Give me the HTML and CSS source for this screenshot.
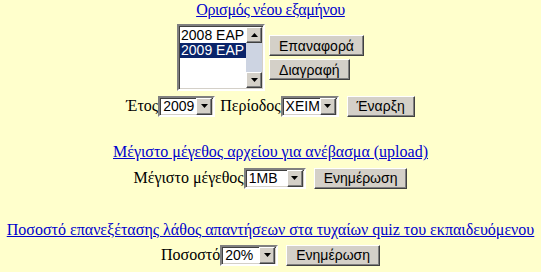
FILE: index.html
```html
<!DOCTYPE html>
<html lang="el">
<head>
<meta charset="utf-8">
<title>Ρυθμίσεις</title>
<link rel="stylesheet" href="styles.css">
</head>
<body>
<div class="page">
  <section class="block first">
    <a class="title" href="#">Ορισμός νέου εξαμήνου</a>
    <div class="semester">
      <div class="listbox">
        <div class="items">
          <div class="item">2008 ΕΑΡ</div>
          <div class="item sel">2009 ΕΑΡ</div>
        </div>
        <div class="vscroll">
          <span class="sbtn"><svg width="7" height="4" viewBox="0 0 7 4"><path d="M3.5 0 L7 4 L0 4 Z" fill="#000"/></svg></span>
          <span class="track"></span>
          <span class="sbtn"><svg width="7" height="4" viewBox="0 0 7 4"><path d="M0 0 L7 0 L3.5 4 Z" fill="#000"/></svg></span>
        </div>
      </div>
      <div class="actions">
        <button class="btn">Επαναφορά</button>
        <button class="btn">Διαγραφή</button>
      </div>
    </div>
    <div class="row r2">
      <span class="lbl">Έτος</span>
      <div class="select w-year"><span class="val">2009</span><span class="arrow"><svg width="7" height="4" viewBox="0 0 7 4"><path d="M0 0 L7 0 L3.5 4 Z" fill="#000"/></svg></span></div>
      <span class="lbl sp">Περίοδος</span>
      <div class="select w-period"><span class="val">ΧΕΙΜ</span><span class="arrow"><svg width="7" height="4" viewBox="0 0 7 4"><path d="M0 0 L7 0 L3.5 4 Z" fill="#000"/></svg></span></div>
      <button class="btn gap">Έναρξη</button>
    </div>
  </section>

  <section class="block second">
    <a class="title" href="#">Μέγιστο μέγεθος αρχείου για ανέβασμα (upload)</a>
    <div class="row r3">
      <span class="lbl">Μέγιστο μέγεθος</span>
      <div class="select w-size"><span class="val">1MB</span><span class="arrow"><svg width="7" height="4" viewBox="0 0 7 4"><path d="M0 0 L7 0 L3.5 4 Z" fill="#000"/></svg></span></div>
      <button class="btn gap">Ενημέρωση</button>
    </div>
  </section>

  <section class="block third">
    <a class="title" href="#">Ποσοστό επανεξέτασης λάθος απαντήσεων στα τυχαίων quiz του εκπαιδευόμενου</a>
    <div class="row r4">
      <span class="lbl">Ποσοστό</span>
      <div class="select w-pct"><span class="val">20%</span><span class="arrow"><svg width="7" height="4" viewBox="0 0 7 4"><path d="M0 0 L7 0 L3.5 4 Z" fill="#000"/></svg></span></div>
      <button class="btn gap">Ενημέρωση</button>
    </div>
  </section>
</div>
</body>
</html>
```

FILE: styles.css
```css
html, body {
  margin: 0;
  padding: 0;
  background: #ffffcc;
}

.page {
  font-family: "Liberation Serif", "Times New Roman", serif;
  font-size: 16px;
  color: #000;
  padding-top: 1px;
}

.block {
  display: flex;
  flex-direction: column;
  align-items: center;
}

.second { margin-top: 26px; }
.third { margin-top: 32px; }

.title {
  color: #0000cc;
  text-decoration: underline;
  line-height: 18px;
  white-space: nowrap;
}

.first .title { letter-spacing: -0.3px; }

.semester {
  display: flex;
  align-items: center;
  margin-top: 5px;
}

.listbox {
  display: flex;
  width: 82px;
  height: 61px;
  background: #fff;
  border-style: solid;
  border-width: 2px;
  border-color: #808080 #ffffff #ffffff #808080;
  box-shadow: inset 1px 1px 0 #404040, inset -1px -1px 0 #d4d0c8;
  padding: 1px;
}

.items {
  flex: 1;
  min-width: 0;
  font-family: "Liberation Sans", Arial, sans-serif;
  font-size: 14px;
  padding-top: 1px;
}

.item {
  height: 15px;
  line-height: 15px;
  padding-left: 1px;
  white-space: nowrap;
  overflow: hidden;
}

.item.sel {
  background: #0a246a;
  color: #fff;
}

.vscroll {
  width: 16px;
  flex: none;
  display: flex;
  flex-direction: column;
  background: #cdd4e2;
}

.track { flex: 1; }

.sbtn {
  height: 14px;
  display: flex;
  align-items: center;
  justify-content: center;
  background: #d4d0c8;
  border-style: solid;
  border-width: 1px;
  border-color: #ffffff #404040 #404040 #ffffff;
  box-shadow: inset -1px -1px 0 #808080;
}

.actions {
  display: flex;
  flex-direction: column;
  align-items: flex-start;
  gap: 3px;
  margin-left: 4px;
}

.btn {
  font-family: "Liberation Sans", Arial, sans-serif;
  font-size: 14px;
  color: #000;
  height: 21px;
  padding: 0 9px;
  background: #d4d0c8;
  border-style: solid;
  border-width: 1px;
  border-color: #ffffff #404040 #404040 #ffffff;
  box-shadow: inset -1px -1px 0 #808080;
  margin: 0;
  white-space: nowrap;
}

.row {
  display: flex;
  align-items: center;
  height: 22px;
}

.r2 { margin-top: 4px; }
.r3 { margin-top: 6px; }
.r4 { margin-top: 5px; }

.lbl { white-space: nowrap; }
.lbl.sp { margin-left: 5px; }

.select {
  display: flex;
  align-items: stretch;
  height: 17px;
  background: #fff;
  border-style: solid;
  border-width: 2px;
  border-color: #808080 #ffffff #ffffff #808080;
  box-shadow: inset 1px 1px 0 #404040, inset -1px -1px 0 #d4d0c8;
  padding: 0 1px;
  font-family: "Liberation Sans", Arial, sans-serif;
  font-size: 14px;
}

.select .val {
  flex: 1;
  line-height: 17px;
  padding-left: 2px;
  white-space: nowrap;
}

.select .arrow {
  width: 14px;
  flex: none;
  display: flex;
  align-items: center;
  justify-content: center;
  background: #d4d0c8;
  border-style: solid;
  border-width: 1px;
  border-color: #ffffff #404040 #404040 #ffffff;
  box-shadow: inset -1px -1px 0 #808080;
}

.w-year { width: 51px; }
.w-period { width: 52px; }
.w-size { width: 56px; }
.w-pct { width: 52px; }

.gap { margin-left: 8px; }
```
